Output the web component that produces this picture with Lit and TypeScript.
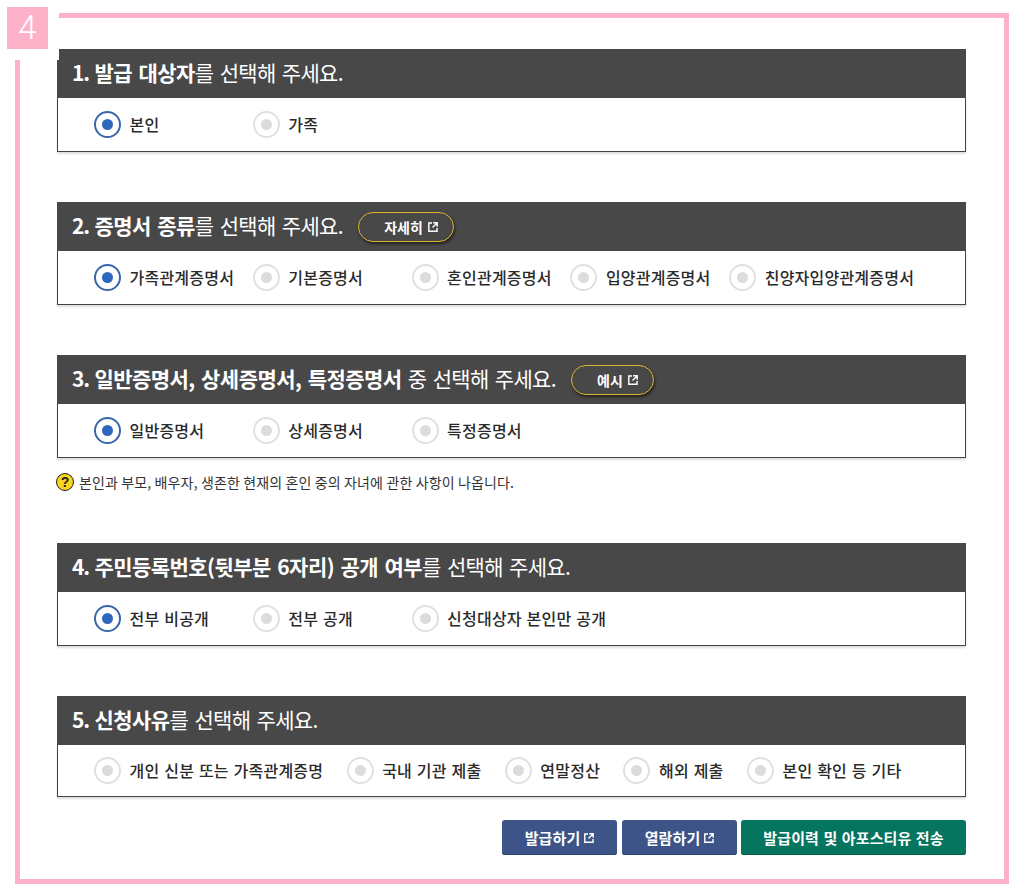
import { LitElement, html, css, svg } from "lit";
import { customElement } from "lit/decorators.js";

interface Sec { num: string; bold: string; rest: string; btn?: string; btnW?: string; opts: string[]; sel: number; note?: string; cls: string }

const SECS: Sec[] = [
  { num: "1.", bold: "발급 대상자", rest: "를 선택해 주세요.", opts: ["본인", "가족"], sel: 0, cls: "s1" },
  { num: "2.", bold: "증명서 종류", rest: "를 선택해 주세요.", btn: "자세히", btnW: "wide", opts: ["가족관계증명서", "기본증명서", "혼인관계증명서", "입양관계증명서", "친양자입양관계증명서"], sel: 0, cls: "s2" },
  { num: "3.", bold: "일반증명서, 상세증명서, 특정증명서", rest: " 중 선택해 주세요.", btn: "예시", btnW: "narrow", opts: ["일반증명서", "상세증명서", "특정증명서"], sel: 0, note: "본인과 부모, 배우자, 생존한 현재의 혼인 중의 자녀에 관한 사항이 나옵니다.", cls: "s3" },
  { num: "4.", bold: "주민등록번호(뒷부분 6자리) 공개 여부", rest: "를 선택해 주세요.", opts: ["전부 비공개", "전부 공개", "신청대상자 본인만 공개"], sel: 0, cls: "s4" },
  { num: "5.", bold: "신청사유", rest: "를 선택해 주세요.", opts: ["개인 신분 또는 가족관계증명", "국내 기관 제출", "연말정산", "해외 제출", "본인 확인 등 기타"], sel: -1, cls: "s5" },
];

const ext = svg`<svg class="ext" viewBox="0 0 10 10" width="10" height="10" fill="none" stroke="currentColor" stroke-width="1.4"><path d="M4 1H.8v8.2H9V6"/><path d="M5.2 .8H9.2V4.8M9 1L4.5 5.5"/></svg>`;

@customElement("app-root")
export class AppRoot extends LitElement {
  static styles = css`
    :host { display: block; width: 1031px; height: 888px; background: #fff; overflow: hidden;
      font-family: "Noto Sans CJK KR", "Noto Sans", sans-serif; color: #222; }
    .frame { position: relative; box-sizing: border-box; width: 994px; height: 871px; margin: 13px 0 0 15px;
      border: 5px solid #fdb2c9; padding: 31px 38px 0 37px; }
    .corner { position: absolute; z-index: 1; left: -20px; top: -18px; width: 59px; height: 60px; background: #fff; }
    .badge { position: absolute; z-index: 2; left: -13px; top: -11px; width: 41px; height: 42px; background: #fdb2c9; color: #fff;
      font: 300 33px/42px Roboto, sans-serif; text-align: center; }
    .s2, .s3, .s5 { margin-top: 50px; }
    .s4 { margin-top: 51px; }
    .head { box-sizing: border-box; height: 49px; background: #484848; color: #fff; display: flex; align-items: center;
      padding-left: 15px; font-size: 21px; font-weight: 400; letter-spacing: -0.7px; word-spacing: 2.25px; white-space: pre; }
    .head b { font-weight: 700; letter-spacing: -0.55px; }
    .head .n { letter-spacing: -1.25px; }
    .ht { margin-top: -3px; }
    .more { box-sizing: border-box; height: 30px; margin-left: 15px; border: 1px solid #dcb62e; border-radius: 15px;
      background: #484848; box-shadow: 1px 2px 3px rgba(0,0,0,.55); color: #fff; font-size: 14px; font-weight: 700;
      letter-spacing: 0; word-spacing: 0; display: flex; align-items: center; justify-content: flex-end; gap: 5px; padding-right: 15px; }
    .more.wide { width: 96px; }
    .more.narrow { width: 83px; }
    .body { box-sizing: border-box; height: 54px; background: #fff; border: 1px solid #444; border-top: 0;
      box-shadow: 0 2px 2px #ddd; display: flex; align-items: center; padding-left: 36px; }
    .s5 .body { height: 52px; gap: 23.4px; }
    .opt { display: flex; align-items: center; gap: 8.5px; flex: 0 0 158.8px; font-size: 16px; font-weight: 500; letter-spacing: 0.22px; word-spacing: 1px; white-space: nowrap; color: #2a2a2a; }
    .opt span.t { margin-top: -2px; }
    .s5 .opt { flex: 0 0 auto; }
    .radio { box-sizing: border-box; width: 27px; height: 27px; border-radius: 50%; border: 2px solid #e0e0e0; background: #fff;
      display: flex; align-items: center; justify-content: center; flex: none; }
    .radio i { display: block; width: 11px; height: 11px; border-radius: 50%; background: #dcdcdc; }
    .radio.on { border-color: #3a66a8; }
    .radio.on i { background: #2e68bd; }
    .note { display: flex; align-items: center; gap: 5px; height: 20px; margin: 14px 0 0 -1px;
      font-size: 14px; letter-spacing: 0.13px; color: #333; }
    .q { box-sizing: border-box; width: 18px; height: 18px; border-radius: 50%; background: #fbd321; border: 1px solid #222;
      display: flex; align-items: center; justify-content: center; font: 700 14px/1 "Liberation Sans", sans-serif; color: #222; }
    .actions { display: flex; justify-content: flex-end; gap: 5px; margin-top: 23px; }
    .btn { box-sizing: border-box; height: 35px; border-radius: 3px; color: #fff; font-size: 15px; font-weight: 700;
      letter-spacing: 0.1px; word-spacing: 1px; display: flex; align-items: center; justify-content: center; gap: 4px; background: #3c5488;
      box-shadow: inset 0 -1px 0 #2e4270; }
    .btn.a { width: 115px; }
    .btn.g { width: 225px; margin-left: -1px; background: #067560; box-shadow: inset 0 -1px 0 #055a4a; }
    .ext { flex: none; }
  `;

  render() {
    return html`<div class="frame">
      <div class="corner"></div>
      <div class="badge">4</div>
      ${SECS.map((s) => html`<section class="${s.cls}">
        <div class="head"><span class="ht"><b><span class="n">${s.num} </span>${s.bold}</b>${s.rest}</span>${s.btn ? html`<span class="more ${s.btnW}">${s.btn}${ext}</span>` : ""}</div>
        <div class="body">
          ${s.opts.map((o, i) => html`<label class="opt"><span class="radio ${i === s.sel ? "on" : ""}"><i></i></span><span class="t">${o}</span></label>`)}
        </div>
        ${s.note ? html`<div class="note"><span class="q">?</span>${s.note}</div>` : ""}
      </section>`)}
      <div class="actions">
        <div class="btn a">발급하기${ext}</div>
        <div class="btn a">열람하기${ext}</div>
        <div class="btn g">발급이력 및 아포스티유 전송</div>
      </div>
    </div>`;
  }
}
